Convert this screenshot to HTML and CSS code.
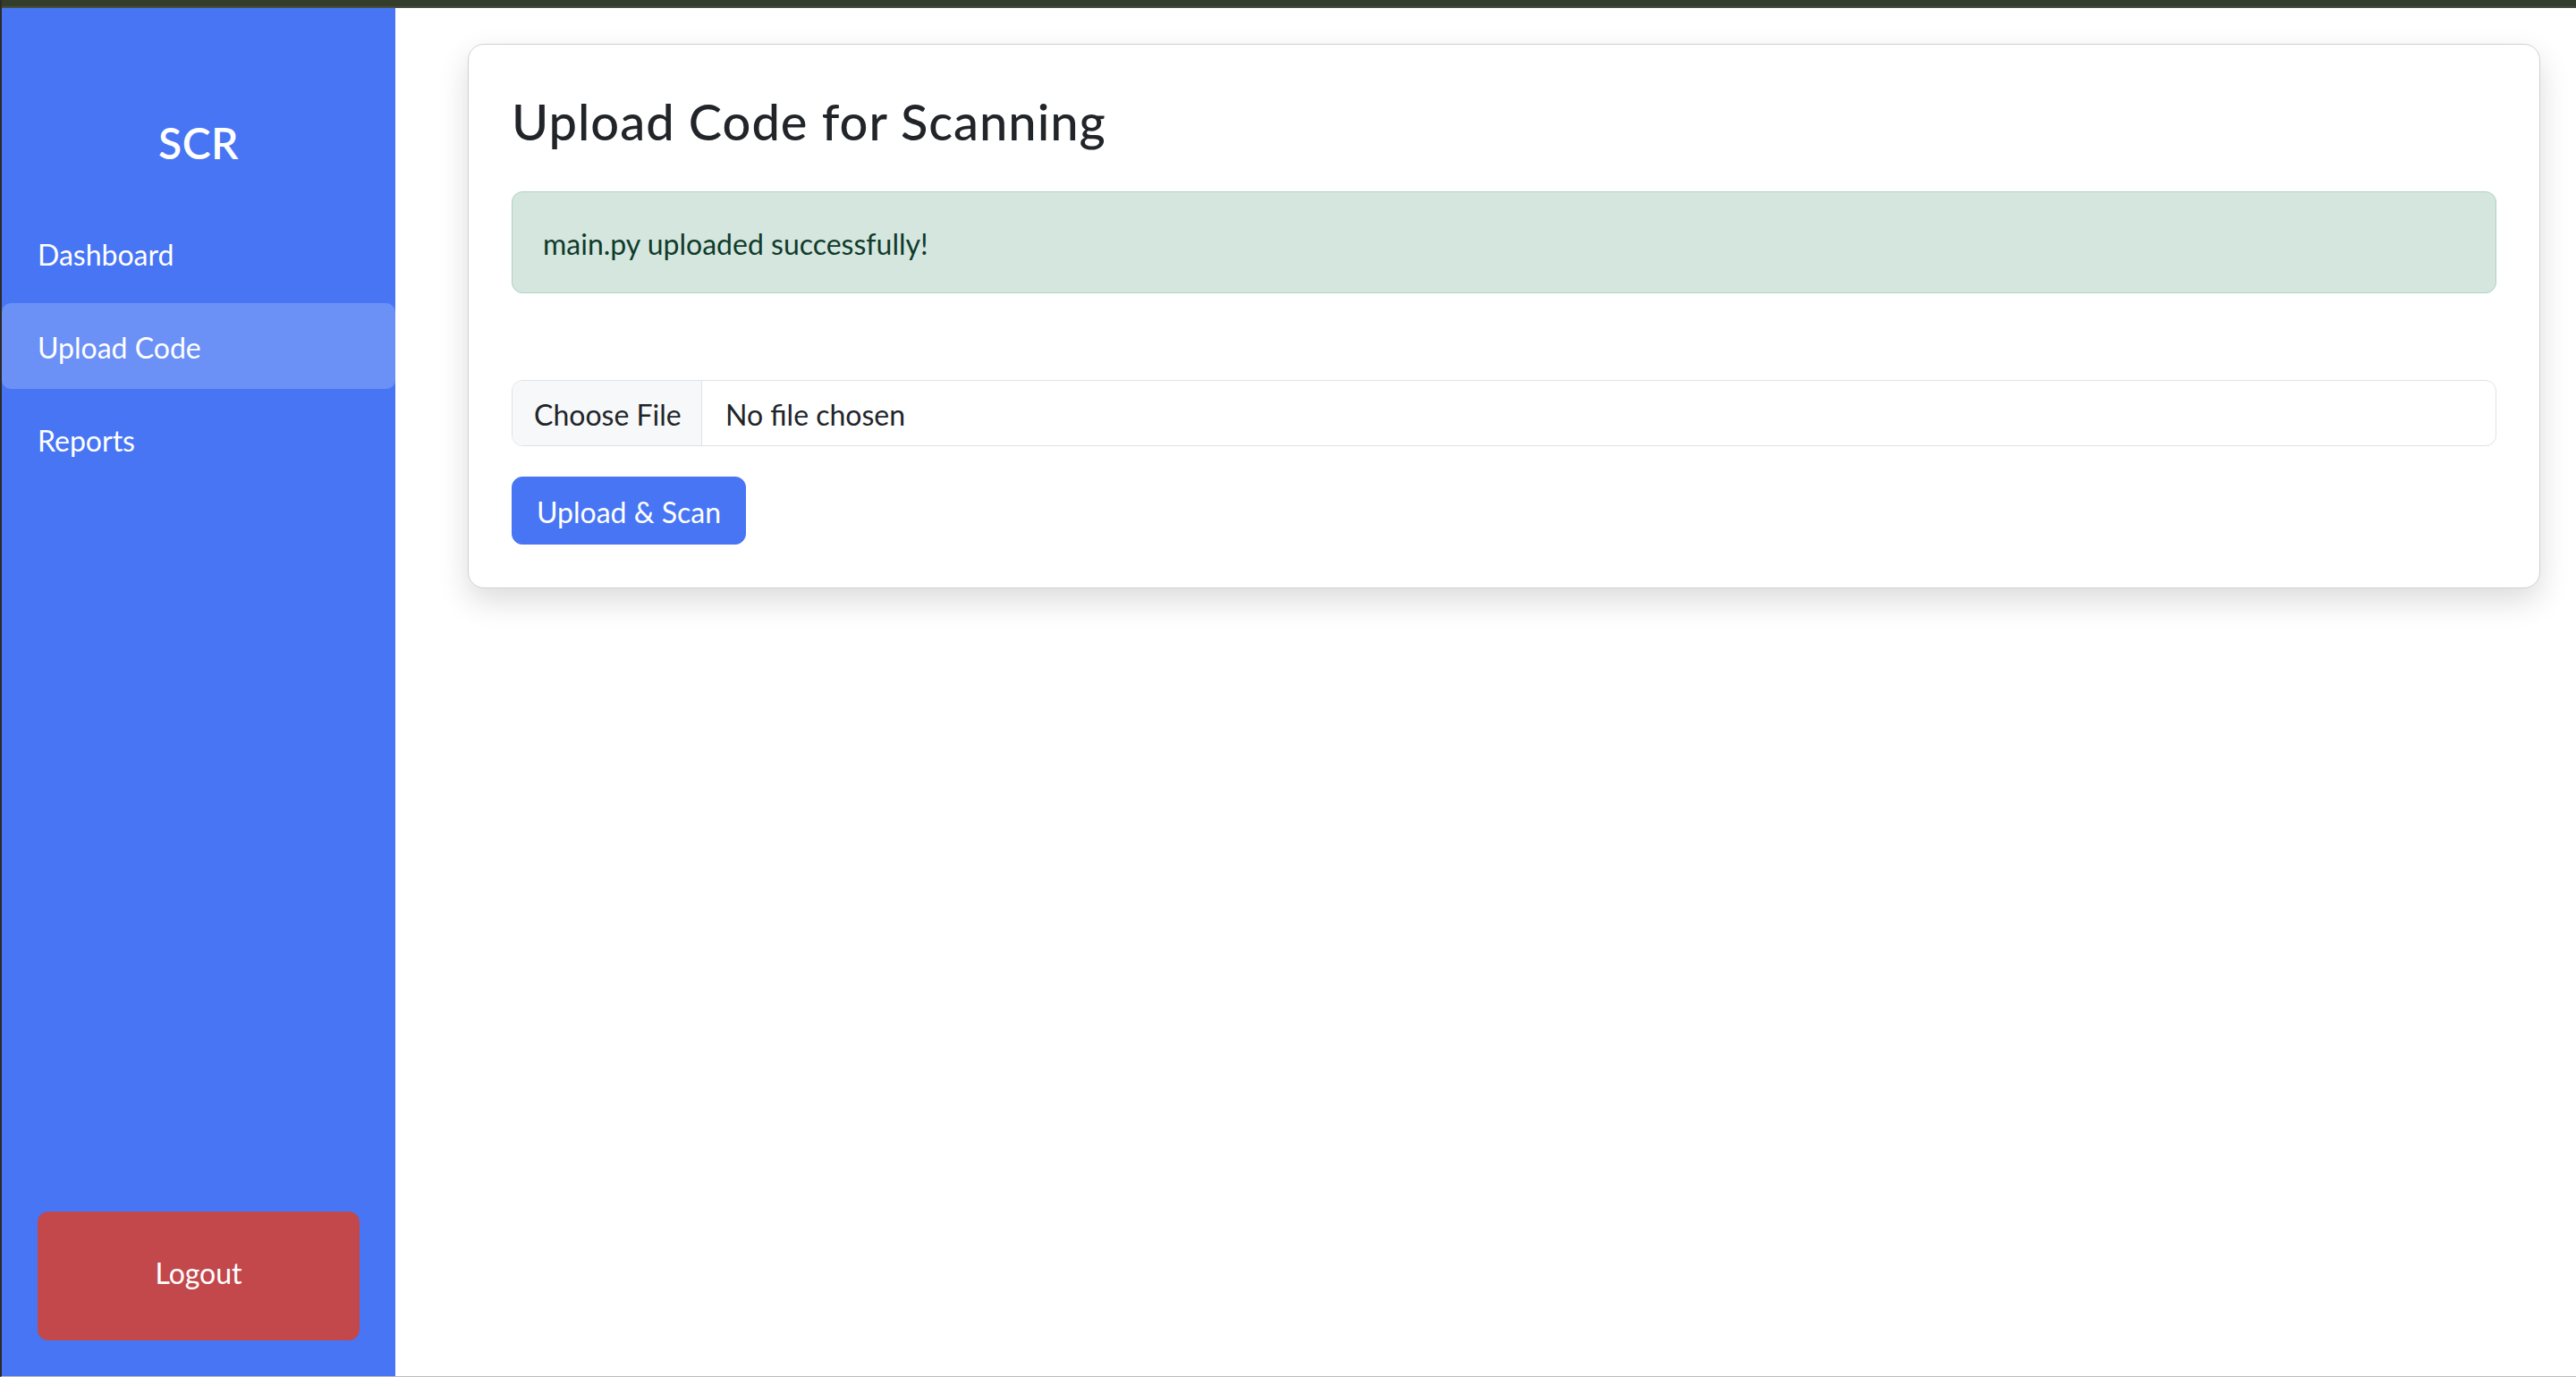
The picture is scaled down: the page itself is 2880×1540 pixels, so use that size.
FILE: index.html
```html
<!DOCTYPE html>
<html lang="en">
<head>
<meta charset="utf-8">
<title>SCR - Upload Code</title>
<link rel="stylesheet" href="styles.css">
</head>
<body>
<div class="window">
  <div class="topbar"></div>
  <div class="app">
    <aside class="sidebar">
      <div class="brand">SCR</div>
      <nav class="nav">
        <a class="nav-link" href="#">Dashboard</a>
        <a class="nav-link active" href="#">Upload Code</a>
        <a class="nav-link" href="#">Reports</a>
      </nav>
      <a class="logout" href="#">Logout</a>
    </aside>
    <main class="main">
      <section class="card">
        <h1 class="title">Upload Code for Scanning</h1>
        <div class="alert">main.py uploaded successfully!</div>
        <form class="form">
          <div class="file-input">
            <span class="file-btn">Choose File</span>
            <span class="file-name">No file chosen</span>
          </div>
          <button class="btn-primary" type="button">Upload &amp; Scan</button>
        </form>
      </section>
    </main>
  </div>
</div>
</body>
</html>
```

FILE: styles.css
```css
* { box-sizing: border-box; }
html, body { margin: 0; padding: 0; }
body {
  width: 2880px;
  height: 1540px;
  overflow: hidden;
  font-family: "Lato", "Noto Sans", sans-serif;
  color: #212529;
  background: #ffffff;
}
.window {
  height: 1540px;
  display: flex;
  flex-direction: column;
  border-left: 2px solid #2a2a2a;
  border-bottom: 1px solid #bdbdbd;
}
.topbar {
  height: 9px;
  flex: none;
  background: #333d2c;
  border-bottom: 2px solid #474d40;
}
.app {
  flex: 1;
  display: flex;
  min-height: 0;
}
.sidebar {
  width: 440px;
  flex: none;
  background: #4775f4;
  display: flex;
  flex-direction: column;
  padding-top: 122px;
}
.brand {
  color: #ffffff;
  font-size: 48px;
  font-weight: 600;
  line-height: 57.6px;
  text-align: center;
  margin-bottom: 46px;
  letter-spacing: 0.5px;
}
.nav {
  display: flex;
  flex-direction: column;
  gap: 8px;
}
.nav-link {
  display: block;
  color: #ffffff;
  text-decoration: none;
  font-size: 32px;
  line-height: 48px;
  padding: 26px 40px 22px;
  border-radius: 10px;
}
.nav-link.active {
  background: rgba(255, 255, 255, 0.2);
}
.logout {
  margin: auto 40px 40px;
  height: 144px;
  display: block;
  background: #c3484c;
  color: #ffffff;
  text-decoration: none;
  text-align: center;
  font-size: 32px;
  line-height: 48px;
  padding: 45px 0 51px;
  border-radius: 12px;
}
.main {
  flex: 1;
  padding: 40px 40px 40px 81px;
}
.card {
  background: #ffffff;
  border: 1px solid #d0d0d0;
  border-radius: 18px;
  box-shadow: 0 14px 34px rgba(0, 0, 0, 0.14);
  padding: 52px 48px 48px;
}
.title {
  margin: 0 0 45px;
  font-size: 56px;
  font-weight: 500;
  line-height: 67.2px;
  letter-spacing: 1px;
  color: #212529;
}
.alert {
  background: #d5e6df;
  border: 1px solid #b0d2c2;
  border-radius: 12px;
  color: #0f3b2b;
  font-size: 32px;
  line-height: 48px;
  padding: 34px 34px 30px;
  margin-bottom: 97px;
}
.form {
  display: flex;
  flex-direction: column;
  align-items: flex-start;
  gap: 34px;
}
.file-input {
  align-self: stretch;
  display: flex;
  height: 74px;
  border: 1px solid #dee2e6;
  border-radius: 12px;
  overflow: hidden;
  font-size: 32px;
  line-height: 48px;
}
.file-btn {
  width: 212px;
  flex: none;
  white-space: nowrap;
  background: #f7f8f9;
  border-right: 1px solid #dee2e6;
  padding: 14px 24px 10px;
  color: #212529;
}
.file-name {
  white-space: nowrap;
  padding: 14px 26px 10px;
  color: #212529;
}
.btn-primary {
  font-family: inherit;
  font-size: 32px;
  line-height: 48px;
  padding: 15px 27px 11px;
  background: #4775f4;
  color: #ffffff;
  border: 1px solid #4775f4;
  border-radius: 12px;
  cursor: pointer;
}
```
